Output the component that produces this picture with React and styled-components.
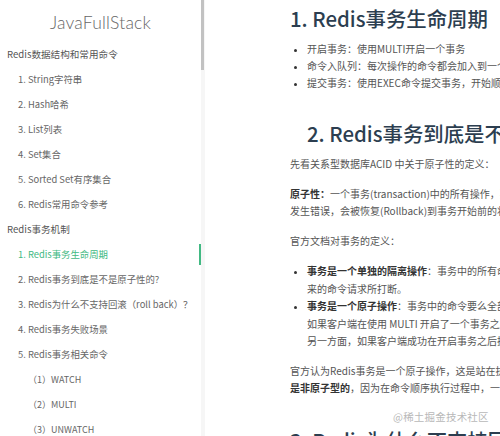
import React from "react";
import styled, { createGlobalStyle } from "styled-components";

const GlobalStyle = createGlobalStyle`
  html, body { margin: 0; padding: 0; background: #fff; overflow: hidden; }
  body {
    font-family: "Noto Sans CJK SC", "Noto Sans", sans-serif;
    -webkit-font-smoothing: antialiased;
  }
`;

const Page = styled.div`
  display: flex;
  width: 500px;
  height: 436px;
  overflow: hidden;
`;

const Sidebar = styled.nav`
  flex: 0 0 201px;
  display: flex;
  flex-direction: column;
  padding-top: 11px;
  box-sizing: border-box;
`;

const Title = styled.div`
  text-align: center;
  font-family: "Lato", "Noto Sans", sans-serif;
  font-size: 17.5px;
  font-weight: 300;
  color: #666;
  line-height: 24px;
  margin-bottom: 9px;
  letter-spacing: 0.2px;
`;

const NavList = styled.ul`
  list-style: none;
  margin: 0;
  padding: 0;
`;

const NavItem = styled.li`
  height: 21px;
  line-height: 21px;
  margin-bottom: 4px;
  white-space: nowrap;
  padding-left: ${(p) => (p.$level === 0 ? 7 : p.$level === 1 ? 18 : 28)}px;
  font-size: ${(p) => (p.$level === 0 ? 9.6 : p.$level === 1 ? 9.4 : 9)}px;
  color: ${(p) => (p.$active ? "#42b983" : p.$level === 0 ? "#555" : "#666")};
  border-right: 2px solid ${(p) => (p.$active ? "#42b983" : "transparent")};
`;

const Scrollbar = styled.div`
  flex: 0 0 4px;
  display: flex;
  flex-direction: column;
  background: #f6f6f6;
`;

const Thumb = styled.div`
  width: 3px;
  height: 70px;
  background: #c2c2c2;
`;

const Main = styled.main`
  position: relative;
  flex: 0 0 auto;
  width: 620px;
  padding-left: 85px;
  color: #555;
  font-size: 10px;
  white-space: nowrap;
`;

const H2 = styled.h2`
  margin: ${(p) => p.$top}px 0 0 0;
  padding-left: ${(p) => p.$indent || 0}px;
  font-size: 20.4px;
  font-weight: 500;
  line-height: 25px;
  color: #2c3e50;
`;

const Bullets = styled.ul`
  margin: ${(p) => p.$top || 0}px 0 0 0;
  padding-left: 17px;
  line-height: ${(p) => p.$lh || 17.5}px;
  li::marker { color: #333; font-size: 9px; }
`;

const Para = styled.p`
  margin: ${(p) => p.$top}px 0 0 0;
  line-height: 17.5px;
`;

const Strong = styled.strong`
  color: #333;
  font-weight: 700;
`;

const Watermark = styled.div`
  position: absolute;
  left: 188px;
  top: 409px;
  font-size: 10.5px;
  color: #b8b8b8;
  letter-spacing: 0.2px;
`;

const nav = [
  { t: "Redis数据结构和常用命令", l: 0 },
  { t: "1. String字符串", l: 1 },
  { t: "2. Hash哈希", l: 1 },
  { t: "3. List列表", l: 1 },
  { t: "4. Set集合", l: 1 },
  { t: "5. Sorted Set有序集合", l: 1 },
  { t: "6. Redis常用命令参考", l: 1 },
  { t: "Redis事务机制", l: 0 },
  { t: "1. Redis事务生命周期", l: 1, a: true },
  { t: "2. Redis事务到底是不是原子性的?", l: 1 },
  { t: "3. Redis为什么不支持回滚（roll back）？", l: 1 },
  { t: "4. Redis事务失败场景", l: 1 },
  { t: "5. Redis事务相关命令", l: 1 },
  { t: "（1）WATCH", l: 2 },
  { t: "（2）MULTI", l: 2 },
  { t: "（3）UNWATCH", l: 2 },
];

export default function App() {
  return (
    <Page>
      <GlobalStyle />
      <Sidebar>
        <Title>JavaFullStack</Title>
        <NavList>
          {nav.map((n) => (
            <NavItem key={n.t} $level={n.l} $active={n.a}>
              {n.t}
            </NavItem>
          ))}
        </NavList>
      </Sidebar>
      <Scrollbar>
        <Thumb />
      </Scrollbar>
      <Main>
        <H2 $top={6}>1. Redis事务生命周期</H2>
        <Bullets $top={9} $lh={17}>
          <li>开启事务：使用MULTI开启一个事务</li>
          <li>命令入队列：每次操作的命令都会加入到一个队列中，但命令此时不会真正被执行</li>
          <li>提交事务：使用EXEC命令提交事务，开始顺序执行队列中的命令</li>
        </Bullets>
        <H2 $top={30} $indent={17}>2. Redis事务到底是不是原子性的?</H2>
        <Para $top={9}>先看关系型数据库ACID 中关于原子性的定义：</Para>
        <Para $top={12}>
          <Strong>原子性：</Strong>一个事务(transaction)中的所有操作，要么全部完成，要么全部不完成，不会结束在中间某个环节。事务在执行过程中
          <br />
          发生错误，会被恢复(Rollback)到事务开始前的状态，就像这个事务从来没有执行过一样。
        </Para>
        <Para $top={12}>官方文档对事务的定义：</Para>
        <Bullets $top={13}>
          <li>
            <Strong>事务是一个单独的隔离操作</Strong>：事务中的所有命令都会序列化、按顺序地执行。事务在执行的过程中，不会被其他客户端发送
            <br />
            来的命令请求所打断。
          </li>
          <li>
            <Strong>事务是一个原子操作</Strong>：事务中的命令要么全部被执行，要么全部都不执行。EXEC 命令负责触发并执行事务中的所有命令：
            <br />
            如果客户端在使用 MULTI 开启了一个事务之后，却因为断线而没有成功执行 EXEC ，那么事务中的所有命令都不会被执行。
            <br />
            另一方面，如果客户端成功在开启事务之后执行 EXEC ，那么事务中的所有命令都会被执行。
          </li>
        </Bullets>
        <Para $top={12}>
          官方认为Redis事务是一个原子操作，这是站在执行与否的角度考虑的。但是从ACID原子性定义来看，严格意义上讲Redis事务
          <br />
          <Strong>是非原子型的</Strong>，因为在命令顺序执行过程中，一旦发生命令执行错误Redis是不会停止执行然后回滚数据。
        </Para>
        <H2 $top={31}>3. Redis为什么不支持回滚（roll back）？</H2>
        <Watermark>@稀土掘金技术社区</Watermark>
      </Main>
    </Page>
  );
}
